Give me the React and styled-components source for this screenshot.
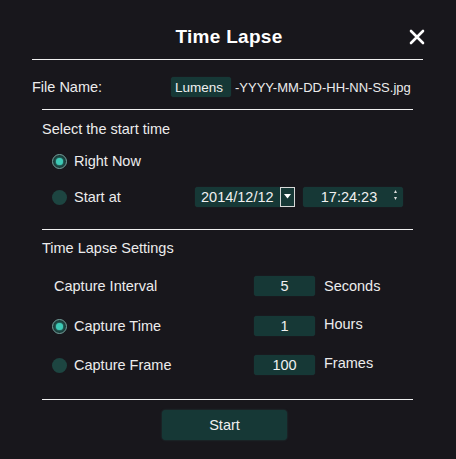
import React from 'react';
import styled, { createGlobalStyle } from 'styled-components';

const GlobalStyle = createGlobalStyle`
  html, body {
    margin: 0;
    padding: 0;
    background: #18171c;
  }
`;

const Dialog = styled.div`
  width: 456px;
  height: 459px;
  box-sizing: border-box;
  background: #18171c;
  color: #ececec;
  font-family: "Liberation Sans", Arial, sans-serif;
  font-size: 14.5px;
  display: flex;
  flex-direction: column;
`;

const Header = styled.div`
  display: grid;
  grid-template-columns: 1fr auto 1fr;
  align-items: center;
  height: 26px;
  padding: 24px 30px 0 32px;
`;

const Title = styled.div`
  grid-column: 2;
  font-size: 19px;
  font-weight: 700;
  color: #ffffff;
  letter-spacing: 0.3px;
`;

const Close = styled.button`
  grid-column: 3;
  justify-self: end;
  width: 18px;
  height: 18px;
  padding: 0;
  border: none;
  background: transparent;
  display: flex;
  align-items: center;
  justify-content: center;
`;

const Divider = styled.div`
  height: 1px;
  background: #f0f0f0;
  margin: ${({ $top }) => $top}px ${({ $side }) => $side}px 0 ${({ $left }) => $left}px;
`;

const FileRow = styled.div`
  display: flex;
  align-items: center;
  height: 20px;
  margin-top: 17px;
  padding-left: 32px;
`;

const Label = styled.div`
  width: ${({ $w }) => $w}px;
  flex-shrink: 0;
  white-space: nowrap;
`;

const Field = styled.div`
  height: 20px;
  box-sizing: border-box;
  background: #163836;
  border-radius: 3px;
  display: flex;
  align-items: center;
  justify-content: ${({ $center }) => ($center ? 'center' : 'flex-start')};
  width: ${({ $w }) => $w}px;
  padding: 0 ${({ $pad }) => $pad || 0}px;
  color: #f0f0f0;
  font-size: ${({ $small }) => ($small ? '13.5px' : 'inherit')};
  box-shadow: 0 0 1px rgba(40, 90, 86, 0.6);
`;

const Suffix = styled.div`
  margin-left: 4px;
  font-size: 13px;
  white-space: nowrap;
`;

const SectionLabel = styled.div`
  margin-top: ${({ $top }) => $top}px;
  padding-left: 42px;
  line-height: 18px;
`;

const Row = styled.div`
  display: flex;
  align-items: center;
  height: 20px;
  margin-top: ${({ $top }) => $top}px;
  padding-left: 52px;
`;

const RadioLabel = styled.div`
  width: ${({ $w }) => $w}px;
  flex-shrink: 0;
  display: flex;
  align-items: center;
  gap: 7px;
  white-space: nowrap;
`;

const Plain = styled.span`
  padding-left: 2px;
`;

const Radio = styled.span`
  width: 15px;
  height: 15px;
  box-sizing: border-box;
  border-radius: 50%;
  flex-shrink: 0;
  display: flex;
  align-items: center;
  justify-content: center;
  background: ${({ $on }) => ($on ? '#1b3e3b' : '#1d4541')};
  border: ${({ $on }) => ($on ? '1.5px solid #75a09c' : 'none')};

  &::after {
    content: '';
    display: ${({ $on }) => ($on ? 'block' : 'none')};
    width: 7px;
    height: 7px;
    border-radius: 50%;
    background: #3ecab6;
    box-shadow: 0 0 2px #3ecab6;
  }
`;

const DateBox = styled(Field)`
  justify-content: space-between;
  padding: 0 0 0 6px;
`;

const DropButton = styled.span`
  width: 15px;
  height: 20px;
  box-sizing: border-box;
  border: 1px solid #d8d8d8;
  background: #163836;
  display: flex;
  align-items: flex-start;
  justify-content: center;
  padding-top: 6px;
`;

const TimeBox = styled(Field)`
  margin-left: 8px;
  position: relative;
  justify-content: center;
  padding-right: 8px;
`;

const Spinner = styled.span`
  position: absolute;
  right: 6px;
  top: 3px;
  display: flex;
  flex-direction: column;
  gap: 4px;
`;

const Unit = styled.div`
  margin-left: 9px;
  margin-top: ${({ $raise }) => ($raise ? '-4px' : '0')};
`;

const Footer = styled.div`
  display: flex;
  justify-content: center;
  margin-top: 10px;
  padding-right: 7px;
`;

const StartButton = styled.button`
  width: 125px;
  height: 30px;
  border: none;
  border-radius: 4px;
  background: #163836;
  color: #f0f0f0;
  font-family: inherit;
  font-size: 14.5px;
  box-shadow: 0 0 2px rgba(40, 90, 86, 0.7);
`;

const settings = [
  { label: 'Capture Interval', value: '5', unit: 'Seconds', top: 19 },
  { label: 'Capture Time', value: '1', unit: 'Hours', top: 20, radio: true, on: true, raise: true },
  { label: 'Capture Frame', value: '100', unit: 'Frames', top: 19, radio: true, on: false, raise: true },
];

export default function App() {
  return (
    <>
      <GlobalStyle />
      <Dialog>
        <Header>
          <Title>Time Lapse</Title>
          <Close aria-label="close">
            <svg width="16" height="16" viewBox="0 0 16 16">
              <path d="M2 2 L14 14 M14 2 L2 14" stroke="#fff" strokeWidth="2.6" strokeLinecap="round" />
            </svg>
          </Close>
        </Header>
        <Divider $top={9} $left={32} $side={33} />

        <FileRow>
          <Label $w={139}>File Name:</Label>
          <Field $w={60} $pad={4} $small>Lumens</Field>
          <Suffix>-YYYY-MM-DD-HH-NN-SS.jpg</Suffix>
        </FileRow>
        <Divider $top={12} $left={42} $side={43} />

        <SectionLabel $top={10}>Select the start time</SectionLabel>
        <Row $top={13}>
          <RadioLabel $w={143}>
            <Radio $on />
            Right Now
          </RadioLabel>
        </Row>
        <Row $top={16}>
          <RadioLabel $w={143}>
            <Radio />
            Start at
          </RadioLabel>
          <DateBox $w={100}>
            2014/12/12
            <DropButton>
              <svg width="7" height="5" viewBox="0 0 7 5">
                <path d="M0 0 H7 L3.5 4.5 Z" fill="#fff" />
              </svg>
            </DropButton>
          </DateBox>
          <TimeBox $w={100}>
            17:24:23
            <Spinner>
              <svg width="3" height="3" viewBox="0 0 3 3">
                <path d="M0 3 L1.5 0 L3 3 Z" fill="#ddd" />
              </svg>
              <svg width="3" height="3" viewBox="0 0 3 3">
                <path d="M0 0 L3 0 L1.5 3 Z" fill="#ddd" />
              </svg>
            </Spinner>
          </TimeBox>
        </Row>
        <Divider $top={22} $left={42} $side={43} />

        <SectionLabel $top={9}>Time Lapse Settings</SectionLabel>
        {settings.map((s) => (
          <Row key={s.label} $top={s.top}>
            <RadioLabel $w={202}>
              {s.radio ? (
                <>
                  <Radio $on={s.on} />
                  {s.label}
                </>
              ) : (
                <Plain>{s.label}</Plain>
              )}
            </RadioLabel>
            <Field $w={61} $center>{s.value}</Field>
            <Unit $raise={s.raise}>{s.unit}</Unit>
          </Row>
        ))}
        <Divider $top={24} $left={42} $side={43} />

        <Footer>
          <StartButton>Start</StartButton>
        </Footer>
      </Dialog>
    </>
  );
}
